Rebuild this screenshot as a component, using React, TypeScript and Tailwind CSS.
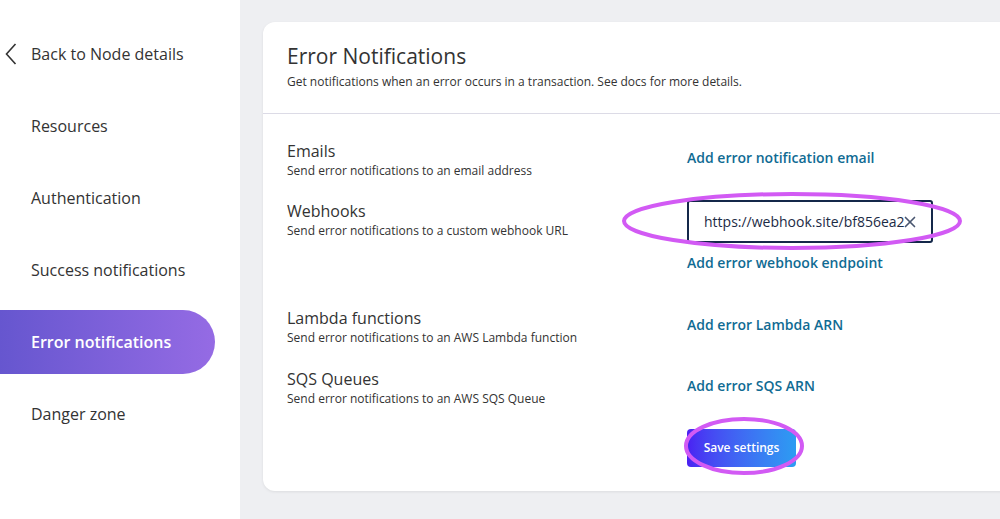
import { X } from "lucide-react"

const navItems = ["Resources", "Authentication", "Success notifications", "Error notifications", "Danger zone"]

const font = { fontFamily: '"Open Sans", "Noto Sans", sans-serif' }

function Sidebar() {
  return (
    <aside className="w-[240px] shrink-0 bg-white pt-[22px] flex flex-col gap-2">
      <div className="h-16 flex items-center text-[16px] text-[#333]">
        <svg width="12" height="22" viewBox="0 0 12 22" className="ml-[5px] mr-[14px]">
          <path d="M10.5 1 L1.5 11 L10.5 21" fill="none" stroke="#333" strokeWidth="1.6" />
        </svg>
        Back to Node details
      </div>
      {navItems.map((item) => {
        const active = item === "Error notifications"
        return (
          <div
            key={item}
            className={
              active
                ? "h-16 w-[215px] flex items-center pl-[31px] rounded-r-full bg-gradient-to-r from-[#6656cf] to-[#956be4] text-white text-[16px] font-semibold"
                : "h-16 flex items-center pl-[31px] text-[16px] text-[#333]"
            }
          >
            {item}
          </div>
        )
      })}
    </aside>
  )
}

function Row({ title, desc, children, className }: { title: string; desc: string; children?: React.ReactNode; className?: string }) {
  return (
    <div className={`flex ${className ?? ""}`}>
      <div className="w-[400px] shrink-0">
        <div className="text-[16px] leading-[20px] font-medium text-[#333]">{title}</div>
        <div className="text-[12px] leading-[18px] text-[#333] mt-[1px]">{desc}</div>
      </div>
      <div className="flex flex-col">{children}</div>
    </div>
  )
}

function Link({ children, className }: { children: React.ReactNode; className?: string }) {
  return <div className={`text-[14px] leading-[20px] font-semibold text-[#106b93] ${className ?? ""}`}>{children}</div>
}

export default function App() {
  return (
    <div className="w-[1000px] h-[519px] flex bg-[#eeeff2] overflow-hidden relative" style={font}>
      <Sidebar />
      <main className="pl-[23px] pt-[22px]">
        <div className="w-[780px] h-[469px] bg-white rounded-[12px] shadow-[0_1px_3px_rgba(0,0,0,0.08)]">
          <div className="pl-6 pt-[20px] pb-[23px] border-b border-[#dcdbe6]">
            <h1 className="text-[21px] leading-[28px] font-medium text-[#333]">Error Notifications</h1>
            <p className="text-[12px] leading-[16px] text-[#333] mt-[4px]">
              Get notifications when an error occurs in a transaction. See docs for more details.
            </p>
          </div>
          <div className="pl-6 pt-[27px]">
            <Row title="Emails" desc="Send error notifications to an email address">
              <Link className="pt-[7px]">Add error notification email</Link>
            </Row>
            <Row title="Webhooks" desc="Send error notifications to a custom webhook URL" className="mt-[21px]">
              <div className="w-[246px] h-[43px] border-2 border-[#14284a] rounded-[3px] flex items-center pl-[15px] pr-[12px] overflow-hidden -mt-[1px]">
                <span className="text-[14px] text-[#1c2b45] whitespace-nowrap overflow-hidden flex-1">https://webhook.site/bf856ea2</span>
                <X size={18} strokeWidth={2.2} className="text-[#4a5670] shrink-0 -ml-[8px]" />
              </div>
              <Link className="mt-[10px]">Add error webhook endpoint</Link>
            </Row>
            <Row title="Lambda functions" desc="Send error notifications to an AWS Lambda function" className="mt-[35px]">
              <Link className="pt-[7px]">Add error Lambda ARN</Link>
            </Row>
            <Row title="SQS Queues" desc="Send error notifications to an AWS SQS Queue" className="mt-[22px]">
              <Link className="pt-[7px]">Add error SQS ARN</Link>
            </Row>
            <div className="ml-[400px] mt-[21px]">
              <button className="w-[109px] h-[38px] rounded-[4px] bg-gradient-to-r from-[#4a1ff2] to-[#2c9cf2] text-white text-[12px] font-semibold">
                Save settings
              </button>
            </div>
          </div>
        </div>
      </main>
      <svg className="absolute left-0 top-0 pointer-events-none" width="1000" height="519">
        <ellipse cx="792" cy="221" rx="168" ry="27" fill="none" stroke="#d25af4" strokeWidth="4" />
        <ellipse cx="744" cy="446" rx="58" ry="27" fill="none" stroke="#d25af4" strokeWidth="4" />
      </svg>
    </div>
  )
}
